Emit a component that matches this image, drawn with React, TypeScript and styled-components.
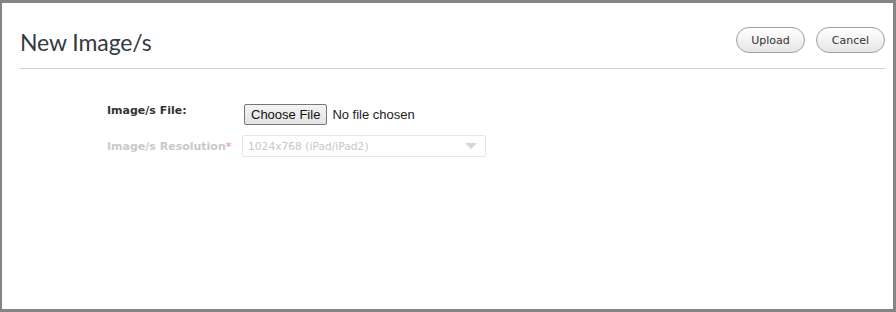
import React from "react";
import styled, { createGlobalStyle } from "styled-components";

const Global = createGlobalStyle`
  html, body { margin: 0; padding: 0; background: #fff; }
  #root { width: 896px; height: 312px; }
`;

const Frame = styled.div`
  box-sizing: border-box;
  width: 896px;
  height: 312px;
  border-style: solid;
  border-color: #858585;
  border-width: 3px 3px 3px 2px;
  background: #fff;
  padding: 0 8px 0 18px;
  display: flex;
  flex-direction: column;
`;

const Header = styled.div`
  box-sizing: border-box;
  display: flex;
  align-items: center;
  justify-content: space-between;
  height: 66px;
  border-bottom: 1px solid #cdd1d4;
  padding-top: 9px;
`;

const Title = styled.h1`
  margin: 3px 0 0 0;
  font-family: Lato, "Open Sans", sans-serif;
  font-weight: 400;
  font-size: 23px;
  color: #333a40;
  letter-spacing: -0.1px;
`;

const Actions = styled.div`
  display: flex;
  gap: 11px;
`;

const PillButton = styled.button`
  box-sizing: border-box;
  width: 69px;
  height: 26px;
  border: 1px solid #a0a0a0;
  border-radius: 13px;
  background: linear-gradient(#ffffff, #e6e6e6);
  font-family: "DejaVu Sans", Verdana, sans-serif;
  font-size: 11px;
  color: #333;
  padding: 0;
  cursor: pointer;
`;

const Form = styled.div`
  display: grid;
  grid-template-columns: 135px 244px;
  row-gap: 10px;
  align-items: center;
  padding: 35px 0 0 87px;
`;

const Label = styled.label<{ $disabled?: boolean }>`
  font-family: "DejaVu Sans", Verdana, sans-serif;
  font-size: 11px;
  font-weight: bold;
  color: ${(p) => (p.$disabled ? "#c9c9c9" : "#333")};
  align-self: ${(p) => (p.$disabled ? "center" : "start")};
`;

const Star = styled.span`
  color: #f2a9a9;
`;

const FileInput = styled.input`
  font-family: "Liberation Sans", Arial, sans-serif;
  font-size: 13px;
  color: #222;
  margin: 0 0 0 2px;
  &::file-selector-button {
    font-family: "Liberation Sans", Arial, sans-serif;
    font-size: 13px;
    height: 21px;
    padding: 0 6px;
    margin-right: 5px;
    border: 1px solid #767676;
    border-radius: 2px;
    background: linear-gradient(#f4f4f4, #e3e3e3);
    color: #111;
  }
`;

const SelectBox = styled.div`
  box-sizing: border-box;
  height: 22px;
  border: 1px solid #e6e6e6;
  border-radius: 2px;
  display: flex;
  align-items: center;
  justify-content: space-between;
  padding: 0 8px 0 5px;
  font-family: "DejaVu Sans", Verdana, sans-serif;
  font-size: 10.7px;
  color: #c8c8c8;
`;

const Arrow = styled.span`
  width: 0;
  height: 0;
  border-left: 6px solid transparent;
  border-right: 6px solid transparent;
  border-top: 6px solid #d6d6d6;
`;

export default function App() {
  return (
    <>
      <Global />
      <Frame>
        <Header>
          <Title>New Image/s</Title>
          <Actions>
            <PillButton>Upload</PillButton>
            <PillButton>Cancel</PillButton>
          </Actions>
        </Header>
        <Form>
          <Label>Image/s File:</Label>
          <FileInput type="file" />
          <Label $disabled>
            Image/s Resolution<Star>*</Star>
          </Label>
          <SelectBox>
            <span>1024x768 (iPad/iPad2)</span>
            <Arrow />
          </SelectBox>
        </Form>
      </Frame>
    </>
  );
}
